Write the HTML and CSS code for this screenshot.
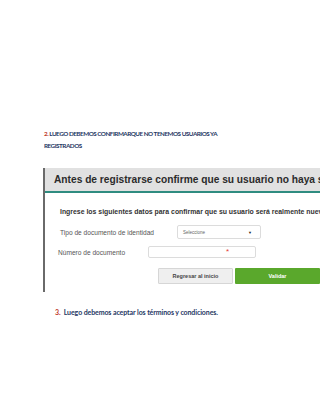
FILE: index.html
```html
<!DOCTYPE html>
<html lang="es">
<head>
<meta charset="utf-8">
<link rel="stylesheet" href="styles.css">
</head>
<body>
<div class="page">
  <h2 class="step"><span class="num">2.</span> LUEGO DEBEMOS CONFIRMARQUE NO TENEMOS USUARIOS YA<br>REGISTRADOS</h2>
  <div class="frame">
    <div class="frame-head">Antes de registrarse confirme que su usuario no haya sido registrado</div>
    <div class="frame-body">
      <p class="intro">Ingrese los siguientes datos para confirmar que su usuario será realmente nuevo</p>
      <div class="row row-tipo">
        <span class="label label-tipo">Tipo de documento de identidad</span>
        <div class="select"><span>Seleccione</span><span class="caret">▼</span></div>
      </div>
      <div class="row row-num">
        <span class="label label-num">Número de documento</span>
        <div class="input"><span class="req">*</span></div>
      </div>
      <div class="buttons">
        <div class="btn btn-back">Regresar al inicio</div>
        <div class="btn btn-ok">Validar</div>
      </div>
    </div>
  </div>
  <p class="step3"><span class="num">3.</span>&nbsp; Luego debemos aceptar los términos y condiciones.</p>
</div>
</body>
</html>
```
FILE: styles.css
```css
html, body {
  margin: 0;
  padding: 0;
  background: #fff;
  overflow: hidden;
}
.page {
  width: 320px;
  height: 414px;
  padding-top: 128px;
  box-sizing: border-box;
  overflow: hidden;
}
.step {
  margin: 0 0 0 44px;
  font-family: Lato, "Liberation Sans", sans-serif;
  font-weight: 700;
  font-size: 6.3px;
  line-height: 12px;
  letter-spacing: -0.48px;
  color: #1f3864;
}
.num {
  color: #c0392b;
}
.frame {
  margin: 16px 0 0 43px;
  border-left: 2px solid #6a6a6a;
  height: 124px;
  overflow: hidden;
  font-family: "Liberation Sans", Arial, sans-serif;
}
.frame-head {
  height: 23px;
  background: #e1e1e1;
  border-bottom: 2px solid #2f8c80;
  padding-left: 9px;
  font-size: 10.2px;
  font-weight: 700;
  color: #2b2b2b;
  line-height: 24px;
  white-space: nowrap;
}
.frame-body {
  padding-left: 15px;
}
.intro {
  margin: 15px 0 0 0;
  font-size: 6.9px;
  font-weight: 700;
  color: #333;
  white-space: nowrap;
  line-height: 8px;
}
.row {
  display: flex;
  align-items: center;
}
.row-tipo {
  margin-top: 9px;
  height: 14px;
}
.row-num {
  margin-top: 7px;
  height: 12px;
}
.label {
  font-size: 6.6px;
  color: #555;
}
.label-tipo {
  width: 117px;
}
.label-num {
  width: 90px;
  margin-left: -2px;
}
.select {
  width: 84px;
  height: 14px;
  box-sizing: border-box;
  border: 1px solid #dcdcdc;
  border-radius: 2px;
  display: flex;
  align-items: center;
  justify-content: space-between;
  padding: 0 8px 0 5px;
  font-size: 4.5px;
  color: #666;
}
.caret {
  font-size: 4px;
  color: #222;
}
.input {
  width: 108px;
  height: 12px;
  box-sizing: border-box;
  border: 1px solid #dcdcdc;
  border-radius: 2px;
  position: relative;
}
.req {
  position: absolute;
  left: 77px;
  top: 0;
  font-size: 8px;
  line-height: 10px;
  color: #e53935;
}
.buttons {
  display: flex;
  margin: 10px 0 0 98px;
  gap: 2px;
}
.btn {
  height: 16px;
  box-sizing: border-box;
  font-size: 5.5px;
  font-weight: 700;
  display: flex;
  align-items: center;
  justify-content: center;
  border-radius: 1px;
}
.btn-back {
  width: 85px;
  background: #efefef;
  border: 1px solid #d6d6d6;
  color: #444;
}
.btn-ok {
  width: 85px;
  flex-shrink: 0;
  background: #5aa82c;
  color: #fff;
}
.step3 {
  margin: 15px 0 0 55px;
  font-family: Lato, "Liberation Sans", sans-serif;
  font-weight: 700;
  font-size: 7px;
  line-height: 10px;
  letter-spacing: -0.1px;
  color: #1f3864;
}
```
